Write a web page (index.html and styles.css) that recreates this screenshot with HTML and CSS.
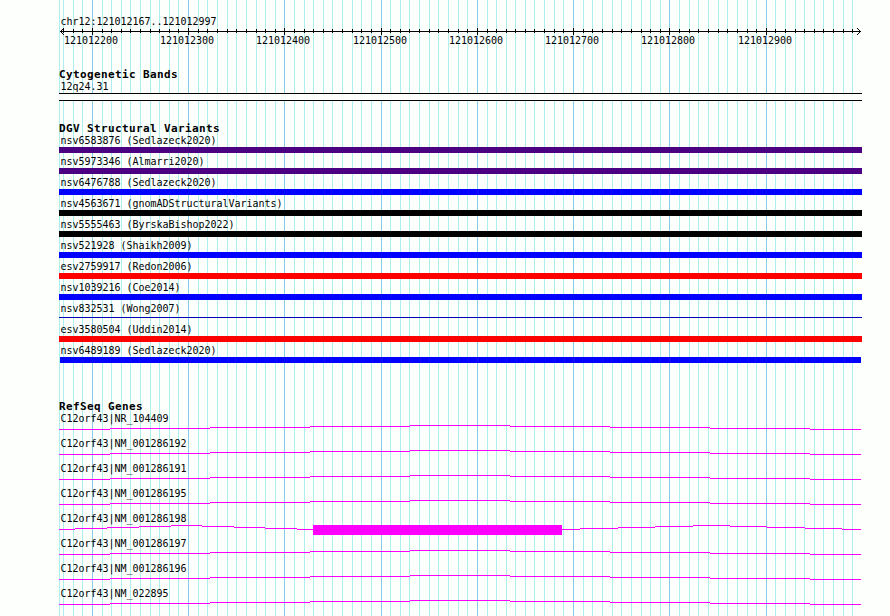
FILE: index.html
```html
<!DOCTYPE html>
<html lang="en">
<head>
<meta charset="utf-8">
<title>chr12:121012167..121012997</title>
<link rel="stylesheet" href="styles.css">
</head>
<body>
<svg class="grid" id="grid" width="890" height="616" shape-rendering="crispEdges" aria-hidden="true"></svg>
<main class="browser">
  <header class="ruler">
    <p class="label">chr12:121012167..121012997</p>
    <svg class="axis" id="axis" width="803" height="7" viewBox="59 28 803 7" shape-rendering="crispEdges"></svg>
    <div class="coords">
      <span>121012200</span><span>121012300</span><span>121012400</span><span>121012500</span><span>121012600</span><span>121012700</span><span>121012800</span><span>121012900</span>
    </div>
  </header>

  <section class="track cyto">
    <h2>Cytogenetic Bands</h2>
    <p class="label">12q24.31</p>
    <div class="band"></div>
  </section>

  <section class="track variants">
    <h2>DGV Structural Variants</h2>
    <div class="variant"><p class="label">nsv6583876 (Sedlazeck2020)</p><div class="bar indigo"></div></div>
    <div class="variant"><p class="label">nsv5973346 (Almarri2020)</p><div class="bar indigo"></div></div>
    <div class="variant"><p class="label">nsv6476788 (Sedlazeck2020)</p><div class="bar blue"></div></div>
    <div class="variant"><p class="label">nsv4563671 (gnomADStructuralVariants)</p><div class="bar black"></div></div>
    <div class="variant"><p class="label">nsv5555463 (ByrskaBishop2022)</p><div class="bar black"></div></div>
    <div class="variant"><p class="label">nsv521928 (Shaikh2009)</p><div class="bar blue"></div></div>
    <div class="variant"><p class="label">esv2759917 (Redon2006)</p><div class="bar red"></div></div>
    <div class="variant"><p class="label">nsv1039216 (Coe2014)</p><div class="bar blue"></div></div>
    <div class="variant"><p class="label">nsv832531 (Wong2007)</p><div class="bar thin"></div></div>
    <div class="variant"><p class="label">esv3580504 (Uddin2014)</p><div class="bar red"></div></div>
    <div class="variant"><p class="label">nsv6489189 (Sedlazeck2020)</p><div class="bar blue inset"></div></div>
  </section>

  <section class="track genes">
    <h2>RefSeq Genes</h2>
    <div class="gene"><p class="label">C12orf43|NR_104409</p><svg class="intron"></svg></div>
    <div class="gene"><p class="label">C12orf43|NM_001286192</p><svg class="intron"></svg></div>
    <div class="gene"><p class="label">C12orf43|NM_001286191</p><svg class="intron"></svg></div>
    <div class="gene"><p class="label">C12orf43|NM_001286195</p><svg class="intron"></svg></div>
    <div class="gene"><p class="label">C12orf43|NM_001286198</p><svg class="intron exon"></svg></div>
    <div class="gene"><p class="label">C12orf43|NM_001286197</p><svg class="intron"></svg></div>
    <div class="gene"><p class="label">C12orf43|NM_001286196</p><svg class="intron"></svg></div>
    <div class="gene"><p class="label">C12orf43|NM_022895</p><svg class="intron"></svg></div>
  </section>
</main>
<script src="script.js"></script>
</body>
</html>
```
FILE: styles.css
```css
* { box-sizing: border-box; }

body {
  margin: 0;
  width: 890px;
  height: 616px;
  overflow: hidden;
  background: #fdfffc;
  color: #000;
  font: 10px/12px "DejaVu Sans Mono", "Liberation Mono", monospace;
}

.grid {
  position: absolute;
  top: 0;
  left: 0;
  z-index: -1;
}

.minor { fill: #afeeee; }
.major { fill: #87ceeb; }

.browser {
  width: 862px;
  height: 616px;
  padding: 15px 0 0 59px;
  overflow: hidden;
}

.label,
.coords span {
  margin: 0;
  height: 12px;
  letter-spacing: -0.02px;
  white-space: pre;
  transform: scaleY(1.1);
}

.label {
  padding-left: 1.4px;
  transform: translateY(0.6px) scaleY(1.1);
}

h2 {
  margin: 0;
  height: 12px;
  font-size: 11px;
  line-height: 14px;
  font-weight: bold;
  letter-spacing: 0.378px;
  white-space: pre;
}

.ruler { height: 53px; }
.axis { display: block; margin-top: 1px; }

.coords {
  display: grid;
  grid-template-columns: 96px 96px 97px 96px 96px 96px 97px 54px;
  padding-left: 5px;
}

.cyto { height: 54px; }

.band {
  height: 8px;
  margin-top: 1px;
  border: solid #000;
  border-width: 1px 0;
  background: #fdfffc;
}

.variants { height: 278px; }
.variant { height: 21px; }

.bar { height: 6px; margin-top: 1px; }
.indigo { background: #4b0082; }
.blue { background: #00f; }
.black { background: #000; }
.red { background: #f00; }
.thin { height: 1px; margin-top: 3px; background: #0000b4; }
.inset { margin-left: 1px; margin-right: 1px; }

.gene { height: 25px; }
.intron { display: block; width: 803px; height: 11px; fill: #f0f; }
```
FILE: script.js
```js
const NS = "http://www.w3.org/2000/svg";

function add(svg, name, attrs) {
  const el = document.createElementNS(NS, name);
  for (const key in attrs) el.setAttribute(key, attrs[key]);
  svg.appendChild(el);
}

// Pixel columns of every tenth base, one row per hundred bases
const minor = [
  63, 73, 82, 102, 111, 121, 130, 140, 150, 159, 169, 178,
  198, 207, 217, 227, 236, 246, 256, 265, 275,
  294, 304, 313, 323, 332, 342, 352, 361, 371,
  390, 400, 409, 419, 429, 438, 448, 458, 467,
  487, 496, 506, 515, 525, 534, 544, 554, 563,
  583, 592, 602, 612, 621, 631, 641, 650, 660,
  679, 689, 698, 708, 718, 727, 737, 747, 756,
  775, 785, 795, 804, 814, 823, 833, 843, 852
];
const major = [92, 188, 284, 381, 477, 573, 669, 766];

const grid = document.getElementById("grid");
const axis = document.getElementById("axis");
[59, ...minor].forEach(x => add(grid, "rect", { x, y: 0, width: 1, height: 616, class: "minor" }));
major.forEach(x => add(grid, "rect", { x, y: 0, width: 1, height: 616, class: "major" }));

add(axis, "rect", { x: 60, y: 31, width: 801, height: 1 });
minor.forEach(x => add(axis, "rect", { x, y: 29, width: 1, height: 4 }));
major.forEach(x => add(axis, "rect", { x, y: 28, width: 1, height: 7 }));
[1, 2, 3].forEach(d => [-d, d].forEach(dy => {
  add(axis, "rect", { x: 60 + d, y: 31 + dy, width: 1, height: 1 });
  add(axis, "rect", { x: 860 - d, y: 31 + dy, width: 1, height: 1 });
}));

// Arched connector: equal-height steps up to the middle and back down
function arch(svg, edges) {
  edges.slice(0, -1).forEach((x, i) => {
    add(svg, "rect", { x: x - 59, y: 1 + Math.abs(i - 4), width: edges[i + 1] - x, height: 1 });
  });
}

document.querySelectorAll(".intron").forEach(svg => {
  svg.setAttribute("shape-rendering", "crispEdges");
  if (svg.classList.contains("exon")) {
    arch(svg, [59, 75, 107, 139, 171, 202, 234, 265, 297, 313]);
    arch(svg, [562, 580, 618, 655, 693, 730, 767, 805, 842, 861]);
    add(svg, "rect", { x: 254, y: 1, width: 249, height: 10 });
  } else {
    arch(svg, [59, 110, 210, 310, 410, 510, 610, 710, 810, 861]);
  }
});
```
